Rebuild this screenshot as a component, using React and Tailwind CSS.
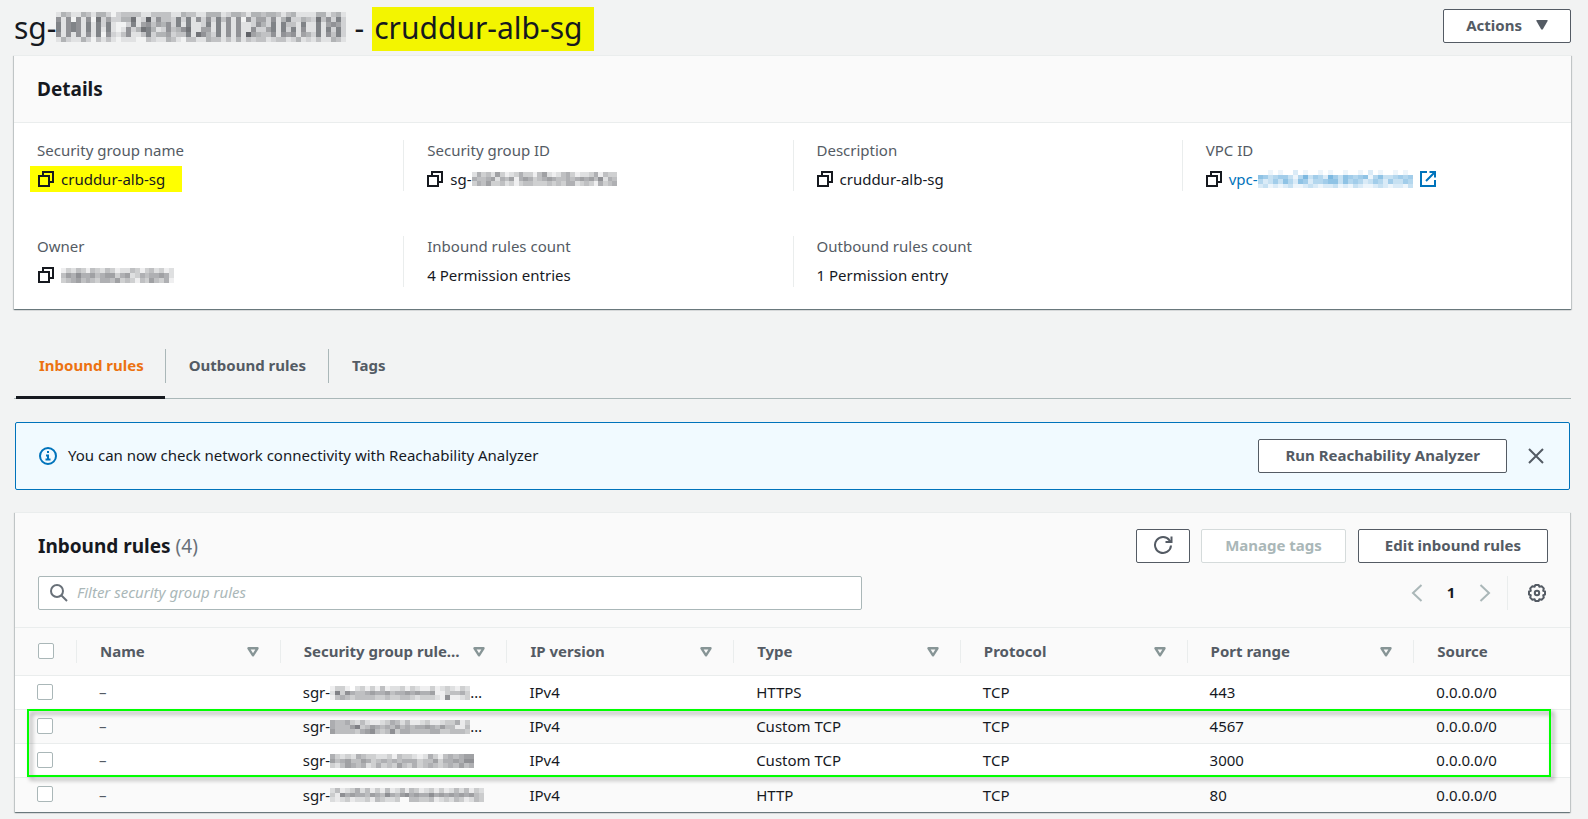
import React from "react";

const GREY = [80, 82, 88];
const BLUE = [50, 145, 208];

function Mosaic({ rows, width, height, ink = GREY, depth = 11, className = "" }) {
  const cols = rows[0].length;
  return (
    <svg
      aria-hidden="true"
      width={width}
      height={height}
      viewBox={`0 0 ${cols} ${rows.length}`}
      preserveAspectRatio="none"
      shapeRendering="crispEdges"
      className={`shrink-0 ${className}`}
    >
      {rows.map((row, y) =>
        row.split("").map((v, x) => (
          <rect key={`${x}-${y}`} x={x} y={y} width="1" height="1" fill={`rgba(${ink.join(",")},${Number(v) / depth})`} />
        ))
      )}
    </svg>
  );
}

const M_TITLE = [
  "1431143144202333311333311433114441244314434431341111441341",
  "6160616082522448129263327271626273616062552614722432836272",
  "7167617172710027156354627171127171616112642717331711715652",
  "7167617171710162487412634681155171616116225717271611717272",
  "6161616170621361137244523371864271616195433616561542716372",
  "1421142031310111003211431033114331314132331233124121311431",
];
const M_SGR = [
  ["1331023131412231321131232132", "2837544565564556565561134453", "1454344443343344323332171123"],
  ["5445324211235424112311233513", "5444683465454645455654644114", "6444435674347355444455334443"],
  ["5323254332231433212531454566", "6456446534545455534463556577", "3246545235343643534543454645"],
  ["2412352413141241431231312424132", "3175655465475467565575656565643", "2123122314322300443341232431243"],
];
const M_SGID = ["2534263123533146212453122351433", "5445625461565345654454565647254", "3546334231344333434355234315345"];
const M_OWNER = ["13243143243122431342312", "46575564566356235455652", "34564543554634314364351"];
const M_VPC = ["0010100201001010010010201001010", "6534553147354275365456146334545", "4235364265244566364542354253354", "2312123112321223121321123212213"];

function CopyIcon() {
  return (
    <svg width="16" height="16" viewBox="0 0 16 16" fill="none" stroke="currentColor" strokeWidth="2" className="shrink-0" aria-hidden="true">
      <path d="M1 5h10v10H1z" />
      <path d="M5 5V1h10v10h-4" />
    </svg>
  );
}

function ExternalIcon() {
  return (
    <svg width="16" height="16" viewBox="0 0 16 16" fill="none" stroke="currentColor" strokeWidth="2" className="shrink-0" aria-hidden="true">
      <path d="M7 1H1v14h14V9" />
      <path d="M9.5 1H15v5.5M15 1 6 10" />
    </svg>
  );
}

function CopyButton({ label }) {
  return (
    <button type="button" aria-label={label} className="flex text-[#16191f]">
      <CopyIcon />
    </button>
  );
}

function Field({ label, first, children }) {
  return (
    <div className={`pb-px pl-[23px] ${first ? "" : "border-l border-[#eaeded]"}`}>
      <dt className="leading-5 text-[#545b64]">{label}</dt>
      <dd className="mt-2 flex h-[22px] items-center text-[#16191f]">{children}</dd>
    </div>
  );
}

function Button({ children, disabled, className = "" }) {
  return (
    <button
      type="button"
      disabled={disabled}
      className={`flex h-[34px] items-center justify-center rounded-xs border bg-white pb-0.5 font-bold ${
        disabled ? "border-[#d5dbdb] text-[#aab7b8]" : "border-[#545b64] text-[#545b64]"
      } ${className}`}
    >
      {children}
    </button>
  );
}

function Checkbox({ label }) {
  return (
    <input
      type="checkbox"
      aria-label={label}
      className="block size-4 appearance-none rounded-xs border border-[#aab7b8] bg-white checked:bg-[#0073bb]"
    />
  );
}

const CARD = "border-t border-[#eaeded] bg-white shadow-[0_1px_1px_0_rgba(0,28,36,0.4),1px_1px_1px_0_rgba(0,28,36,0.15),-1px_1px_1px_0_rgba(0,28,36,0.15)]";

const COLUMNS = ["Name", "Security group rule…", "IP version", "Type", "Protocol", "Port range", "Source"];

const RULES = [
  { type: "HTTPS", port: "443", mosaic: M_SGR[0], w: 140, more: true },
  { type: "Custom TCP", port: "4567", mosaic: M_SGR[1], w: 140, more: true },
  { type: "Custom TCP", port: "3000", mosaic: M_SGR[2], w: 144 },
  { type: "HTTP", port: "80", mosaic: M_SGR[3], w: 154 },
];

export default function App() {
  return (
    <main className="min-h-screen bg-[#f2f3f3] pr-[17px] pb-[7px] pl-[14px] font-['Noto_Sans','Open_Sans',sans-serif] text-[15px] text-[#16191f]">
      <header className="flex h-[55px] items-start justify-between">
        <h1 className="mt-[7px] flex h-[44px] items-center pb-1 text-[30px]">
          <span>sg-</span>
          <Mosaic rows={M_TITLE} width={290} height={30} depth={10} />
          <span className="mx-2">-</span>
          <mark className="-mb-1 flex h-[44px] w-[222px] items-center bg-[#f3f500] pb-1 pl-0.5 text-[#16191f]">cruddur-alb-sg</mark>
        </h1>
        <Button className="mt-[9px] gap-3.5 px-[22px]">
          Actions
          <svg width="12" height="10" viewBox="0 0 12 10" fill="currentColor" aria-hidden="true">
            <path d="M1 0h10q1 0 .6 1L7 9Q6 10.400 5 9L.4 1Q0 0 1 0z" />
          </svg>
        </Button>
      </header>

      <section className={CARD}>
        <h2 className="flex h-[67px] items-center border-b border-[#eaeded] bg-[#fafafa] pl-[23px] text-[19px] font-bold">Details</h2>
        <dl className="grid grid-cols-4 gap-y-[45px] pt-[17px] pb-[22px]">
          <Field label="Security group name" first>
            <mark className="-ml-[7px] flex h-[26px] w-[152px] shrink-0 items-center gap-[7px] bg-[#ffff00] pl-2 text-[#16191f]">
              <CopyButton label="Copy security group name" />
              cruddur-alb-sg
            </mark>
          </Field>
          <Field label="Security group ID">
            <span className="mr-[7px] flex"><CopyButton label="Copy security group ID" /></span>
            sg-
            <Mosaic rows={M_SGID} width={145} height={14} />
          </Field>
          <Field label="Description">
            <span className="mr-[7px] flex"><CopyButton label="Copy description" /></span>
            cruddur-alb-sg
          </Field>
          <Field label="VPC ID">
            <span className="mr-[7px] flex"><CopyButton label="Copy VPC ID" /></span>
            <a href="#vpc" className="flex items-center text-[#0073bb]">
              vpc-
              <Mosaic rows={M_VPC} width={155} height={18} ink={BLUE} className="mr-[7px]" />
              <ExternalIcon />
            </a>
          </Field>
          <Field label="Owner" first>
            <span className="mr-[7px] ml-px flex"><CopyButton label="Copy owner" /></span>
            <Mosaic rows={M_OWNER} width={113} height={15} />
          </Field>
          <Field label="Inbound rules count">4 Permission entries</Field>
          <Field label="Outbound rules count">1 Permission entry</Field>
        </dl>
      </section>

      <nav role="tablist" className="mt-10 flex h-[50px] border-b border-[#aab7b8] font-bold text-[#545b64]">
        <button type="button" role="tab" aria-selected="true" className="relative ml-0.5 h-[34px] border-r border-[#aab7b8] pr-[21px] pb-0.5 pl-[23px] text-[#ec7211]">
          Inbound rules
          <span className="absolute top-[47px] right-0 left-0 h-[3px] bg-[#16191f]" />
        </button>
        <button type="button" role="tab" aria-selected="false" className="h-[34px] border-r border-[#aab7b8] pr-[22px] pb-0.5 pl-[23px]">Outbound rules</button>
        <button type="button" role="tab" aria-selected="false" className="h-[34px] pb-0.5 pl-[23px]">Tags</button>
      </nav>

      <div className="mx-px mt-[23px] flex h-[68px] items-center rounded-xs border border-[#0073bb] bg-[#f1faff] pr-[25px] pl-[23px]">
        <svg width="18" height="18" viewBox="0 0 18 18" fill="none" stroke="#0073bb" strokeWidth="2" className="mr-[11px] shrink-0" aria-hidden="true">
          <circle cx="9" cy="9" r="8" />
          <path d="M8 5h2M7 8.500h2V12.500M6.500 12.500h5" />
        </svg>
        <p className="flex-1 pb-0.5">You can now check network connectivity with Reachability Analyzer</p>
        <Button className="px-[26px]">Run Reachability Analyzer</Button>
        <button type="button" aria-label="Dismiss" className="ml-[21px] text-[#545b64]">
          <svg width="16" height="16" viewBox="0 0 16 16" fill="none" stroke="currentColor" strokeWidth="2" aria-hidden="true">
            <path d="M1 1l14 14M15 1 1 15" />
          </svg>
        </button>
      </div>

      <section className={`mx-px mt-[22px] ${CARD}`}>
        <div className="bg-[#fafafa] pt-4 pr-[22px] pb-[17px] pl-[23px]">
          <div className="flex h-[34px] items-center">
            <h2 className="flex-1 text-[19px] font-bold">
              Inbound rules <span className="font-normal text-[#687078]">(4)</span>
            </h2>
            <Button className="w-[54px]">
              <svg width="20" height="20" viewBox="0 0 20 20" fill="none" stroke="currentColor" strokeWidth="2" aria-label="Refresh">
                <path d="M18 10.500A8 8 0 1 1 16.500 5.300L18 7" />
                <path d="M18.500 1.500V7H12.500" />
              </svg>
            </Button>
            <Button disabled className="ml-[11px] px-[23px]">Manage tags</Button>
            <Button className="ml-3 px-[26px]">Edit inbound rules</Button>
          </div>
          <div className="mt-[13px] flex h-[34px] items-center">
            <label className="flex h-[34px] w-[54.6%] items-center rounded-xs border border-[#aab7b8] bg-white pl-[11px]">
              <svg width="18" height="18" viewBox="0 0 18 18" fill="none" stroke="#687078" strokeWidth="2" className="shrink-0" aria-hidden="true">
                <circle cx="7" cy="7" r="6" />
                <path d="M11.500 11.500 17 17" />
              </svg>
              <input
                type="search"
                aria-label="Filter security group rules"
                placeholder="Filter security group rules"
                className="ml-[9px] min-w-0 flex-1 bg-transparent pb-0.5 outline-none placeholder:text-[#aab7b8] placeholder:italic"
              />
            </label>
            <div className="ml-auto flex h-[34px] items-center pr-px">
              <button type="button" aria-label="Previous page" className="text-[#aab7b8]">
                <svg width="12" height="18" viewBox="0 0 12 18" fill="none" stroke="currentColor" strokeWidth="2" aria-hidden="true"><path d="M10.500 1 2 9l8.500 8" /></svg>
              </button>
              <button type="button" className="w-[56px] pb-0.5 font-bold">1</button>
              <button type="button" aria-label="Next page" className="text-[#aab7b8]">
                <svg width="12" height="18" viewBox="0 0 12 18" fill="none" stroke="currentColor" strokeWidth="2" aria-hidden="true"><path d="M1.500 1 10 9l-8.500 8" /></svg>
              </button>
              <button type="button" aria-label="Preferences" className="ml-4 flex h-[34px] items-center border-l border-[#eaeded] pl-[19px] text-[#545b64]">
                <svg width="20" height="20" viewBox="0 0 20 20" fill="none" stroke="currentColor" strokeWidth="2" strokeLinejoin="round" aria-hidden="true">
                  <path d="M8.300 2h3.400l.6 1.800 2.300-.6 2.200 2.200-.6 2.300 1.800.7v3.200l-1.800.7.6 2.300-2.200 2.200-2.300-.6-.6 1.800H8.300l-.6-1.800-2.300.6-2.200-2.200.6-2.300L2 11.600V8.400l1.800-.7-.6-2.300 2.200-2.200 2.300.6z" />
                  <circle cx="10" cy="10" r="2.200" />
                </svg>
              </button>
            </div>
          </div>
        </div>

        <div className="relative">
          <table className="w-full table-fixed border-collapse text-left">
            <colgroup>
              <col className="w-[61px]" />
              <col className="w-[13.1%]" />
              <col className="w-[14.58%]" />
              <col className="w-[14.58%]" />
              <col className="w-[14.58%]" />
              <col className="w-[14.58%]" />
              <col className="w-[14.58%]" />
              <col />
            </colgroup>
            <thead className="border-y border-[#eaeded] bg-[#fafafa] text-[#545b64]">
              <tr className="h-[48px]">
                <th scope="col" className="p-0 pb-0.5 pl-[23px]"><Checkbox label="Select all rules" /></th>
                {COLUMNS.map((c, i) => (
                  <th key={c} scope="col" className="p-0 font-bold">
                    <div className="flex h-[23px] items-center justify-between border-l border-[#eaeded] pr-[21px] pl-[23px]">
                      <span className="whitespace-nowrap">{c}</span>
                      {i < 6 && (
                        <svg width="12" height="10" viewBox="0 0 12 10" fill="none" stroke="#879596" strokeWidth="2.400" strokeLinejoin="round" className="shrink-0" aria-hidden="true">
                          <path d="M1.500 1.300h9L6 8.300z" />
                        </svg>
                      )}
                    </div>
                  </th>
                ))}
              </tr>
            </thead>
            <tbody>
              {RULES.map((r, i) => (
                <tr key={i} className="h-[34px] border-b border-[#eaeded] last:border-b-0 even:bg-[#fafafa]">
                  <td className="p-0 pb-0.5 pl-[22px]"><Checkbox label={`Select rule ${r.port}`} /></td>
                  <td className="p-0 pl-[23px] text-[#545b64]">–</td>
                  <td className="p-0 pl-[23px]">
                    <div className="flex items-center">
                      sgr-
                      <Mosaic rows={r.mosaic} width={r.w} height={14} />
                      {r.more && "…"}
                    </div>
                  </td>
                  <td className="p-0 pl-[23px]">IPv4</td>
                  <td className="p-0 pl-[23px]">{r.type}</td>
                  <td className="p-0 pl-[23px]">TCP</td>
                  <td className="p-0 pl-[23px]">{r.port}</td>
                  <td className="p-0 pl-[23px]">0.0.0.0/0</td>
                </tr>
              ))}
            </tbody>
          </table>
          <div className="pointer-events-none absolute top-[82px] right-[19px] left-3 h-[68px] border-2 border-[#00ff00] drop-shadow-[3px_3px_2px_rgba(0,0,0,0.4)]" />
        </div>
      </section>
    </main>
  );
}
